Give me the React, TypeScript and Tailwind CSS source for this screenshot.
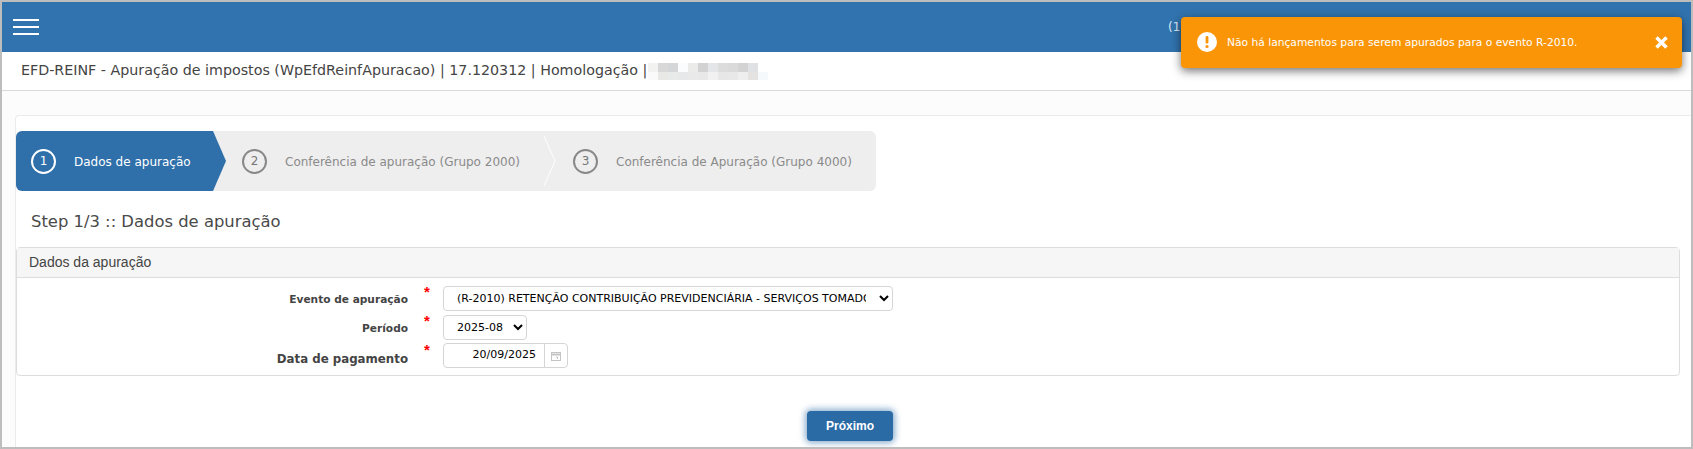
import React from "react";

const blurTop = ["bg-[#f2f2f1]","bg-[#d9d8d8]","bg-[#d5d6d7]","bg-[#fbfcfd]","bg-[#ebebe9]","bg-[#d3d2d3]","bg-[#e4e6e9]","bg-[#dddcdc]","bg-[#dbdada]","bg-[#d4d3d4]","bg-[#dfe1e4]"];
const blurBottom = ["bg-[#fafafa]","bg-[#e8e8e6]","bg-[#e8e9e9]","bg-[#e6e8e9]","bg-[#e8e9e8]","bg-[#e8e8e8]","bg-[#f1f1f1]","bg-[#e7e7e7]","bg-[#e8e8e8]","bg-[#eeeeee]","bg-[#e4e3e2]","bg-[#f6f9fc]"];

function Step({ n, label, className, chevron }: { n: number; label: string; className: string; chevron?: boolean }) {
  return (
    <div className={"relative flex items-center " + className}>
      <span className="flex h-[25px] w-[25px] items-center justify-center rounded-full border-2 border-[#888888] text-[12px] text-[#777777]">{n}</span>
      <span className="ml-[18px] mt-[1px] whitespace-nowrap text-[12px] text-[#8a8a8a]">{label}</span>
      {chevron && (
        <svg width="14" height="60" viewBox="0 0 14 60" className="absolute right-0 top-0">
          <path d="M1 5 L12 30 L1 55" fill="none" stroke="#ffffff" strokeWidth="1" />
        </svg>
      )}
    </div>
  );
}

function Row({ label, labelClass, children }: { label: string; labelClass: string; children: React.ReactNode }) {
  return (
    <div className="flex h-[25px]">
      <div className={"w-[391px] self-end text-right font-bold text-[#444444] " + labelClass}>{label}</div>
      <div className="ml-[16px] w-[18px] text-[15px] font-bold leading-[14px] text-[#ff0000] [font-family:'Liberation_Sans',sans-serif]">*</div>
      <div className="ml-[1px]">{children}</div>
    </div>
  );
}

export default function App() {
  return (
    <div className="relative h-[449px] w-[1693px] overflow-hidden border-2 border-[#bdbdbd] bg-white [font-family:'DejaVu_Sans',sans-serif]">
      <header className="flex h-[50px] items-center bg-[#3173ae] pl-[11px]">
        <div className="flex w-[26px] flex-col gap-[5px]">
          <span className="h-[2px] bg-white" />
          <span className="h-[2px] bg-white" />
          <span className="h-[2px] bg-white" />
        </div>
        <span className="ml-[1129px] text-[12px] text-[#dbe8f3]">(1</span>
      </header>

      <div className="flex h-[39px] items-center border-b border-[#d9d9d9] pl-[19px] text-[14.25px] text-[#444444]">
        <span>EFD-REINF - Apuração de impostos (WpEfdReinfApuracao) | 17.120312 | Homologação |</span>
        <div className="ml-[1px] mt-[1px] flex flex-col">
          <div className="flex">
            {blurTop.map((c, i) => <span key={i} className={"h-[9px] w-[10px] " + c} />)}
          </div>
          <div className="flex">
            {blurBottom.map((c, i) => <span key={i} className={"h-[8px] w-[10px] " + c} />)}
          </div>
        </div>
      </div>

      <main className="bg-[#fcfcfc] pl-[13px] pt-[24px]">
        <section className="h-[340px] rounded-tl-[4px] border-t border-l border-[#ebebeb] bg-white pt-[15px]">
          <div className="flex h-[60px] w-[860px] items-stretch overflow-hidden rounded-[6px] bg-[#eeeeee]">
            <div className="flex w-[210px] items-center bg-[#2f70aa] pl-[15px] [clip-path:polygon(0_0,197px_0,210px_30px,197px_60px,0_60px)]">
              <span className="flex h-[25px] w-[25px] items-center justify-center rounded-full border-2 border-white text-[12px] text-white">1</span>
              <span className="ml-[18px] mt-[1px] whitespace-nowrap text-[12px] text-white">Dados de apuração</span>
            </div>
            <Step n={2} label="Conferência de apuração (Grupo 2000)" className="w-[331px] pl-[16px]" chevron />
            <Step n={3} label="Conferência de Apuração (Grupo 4000)" className="pl-[16px]" />
          </div>

          <h2 className="mt-[19px] pl-[15px] text-[16.4px] font-normal leading-[24px] text-[#4a4a4a]">Step 1/3 :: Dados de apuração</h2>

          <div className="mr-[11px] mt-[13px] rounded-[4px] border border-[#dddddd]">
            <div className="flex h-[30px] items-center border-b border-[#dddddd] bg-[#f6f6f6] pl-[12px] text-[14px] text-[#444444] [font-family:'Liberation_Sans',sans-serif]">Dados da apuração</div>
            <div className="flex flex-col gap-[4px] pb-[7px] pt-[7px]">
              <Row label="Evento de apuração" labelClass="pb-[2px] text-[10.6px]">
                <select defaultValue="a" className="h-[25px] w-[450px] rounded-[4px] border border-[#d5d5d5] bg-white pl-[9px] pr-[10px] text-[11px] text-black">
                  <option value="a">(R-2010) RETENÇÃO CONTRIBUIÇÃO PREVIDENCIÁRIA - SERVIÇOS TOMADOS</option>
                </select>
              </Row>
              <Row label="Período" labelClass="pb-[2px] text-[10.6px]">
                <select defaultValue="a" className="h-[25px] w-[84px] rounded-[4px] border border-[#d5d5d5] bg-white pl-[9px] text-[11px] text-black">
                  <option value="a">2025-08</option>
                </select>
              </Row>
              <Row label="Data de pagamento" labelClass="-mb-[1px] text-[11.8px]">
                <div className="flex h-[25px] w-[125px] rounded-[4px] border border-[#d5d5d5] bg-white">
                  <input readOnly value="20/09/2025" className="w-[101px] border-r border-[#d5d5d5] pr-[8px] text-right text-[11px] text-black outline-none" />
                  <span className="flex flex-1 items-center justify-center">
                    <svg width="12" height="12" viewBox="0 0 12 12" fill="none" stroke="#c4c4c4">
                      <rect x="1.5" y="2.5" width="9" height="8" />
                      <path d="M1.5 4.5h9" strokeWidth="2" />
                      <path d="M6 7h1.5v2" />
                    </svg>
                  </span>
                </div>
              </Row>
            </div>
          </div>

          <div className="mt-[35px] flex justify-start pl-[791px]">
            <button className="h-[30px] w-[86px] rounded-[4px] bg-[#2a6aa5] text-[12px] font-bold text-white shadow-[0_0_6px_2px_rgba(42,106,165,0.55)] [font-family:'Liberation_Sans',sans-serif]">Próximo</button>
          </div>
        </section>
      </main>

      <div className="absolute left-[1179px] top-[15px] flex h-[51px] w-[501px] items-center rounded-[4px] bg-[#fa9507] pl-[16px] pr-[14px] text-white shadow-[0_3px_10px_rgba(0,0,0,0.55)]">
        <svg width="20" height="20" viewBox="0 0 20 20" className="-mt-[1px]">
          <circle cx="10" cy="10" r="10" fill="#ffffff" />
          <rect x="8.6" y="4" width="2.8" height="7.5" rx="1" fill="#fa9507" />
          <circle cx="10" cy="14.5" r="1.6" fill="#fa9507" />
        </svg>
        <span className="ml-[10px] mt-[2px] flex-1 text-[10.7px]">Não há lançamentos para serem apurados para o evento R-2010.</span>
        <svg width="13" height="13" viewBox="0 0 13 13" stroke="#ffffff" strokeWidth="3.5">
          <path d="M1.5 1.5 L11.5 11.5 M11.5 1.5 L1.5 11.5" />
        </svg>
      </div>
    </div>
  );
}
